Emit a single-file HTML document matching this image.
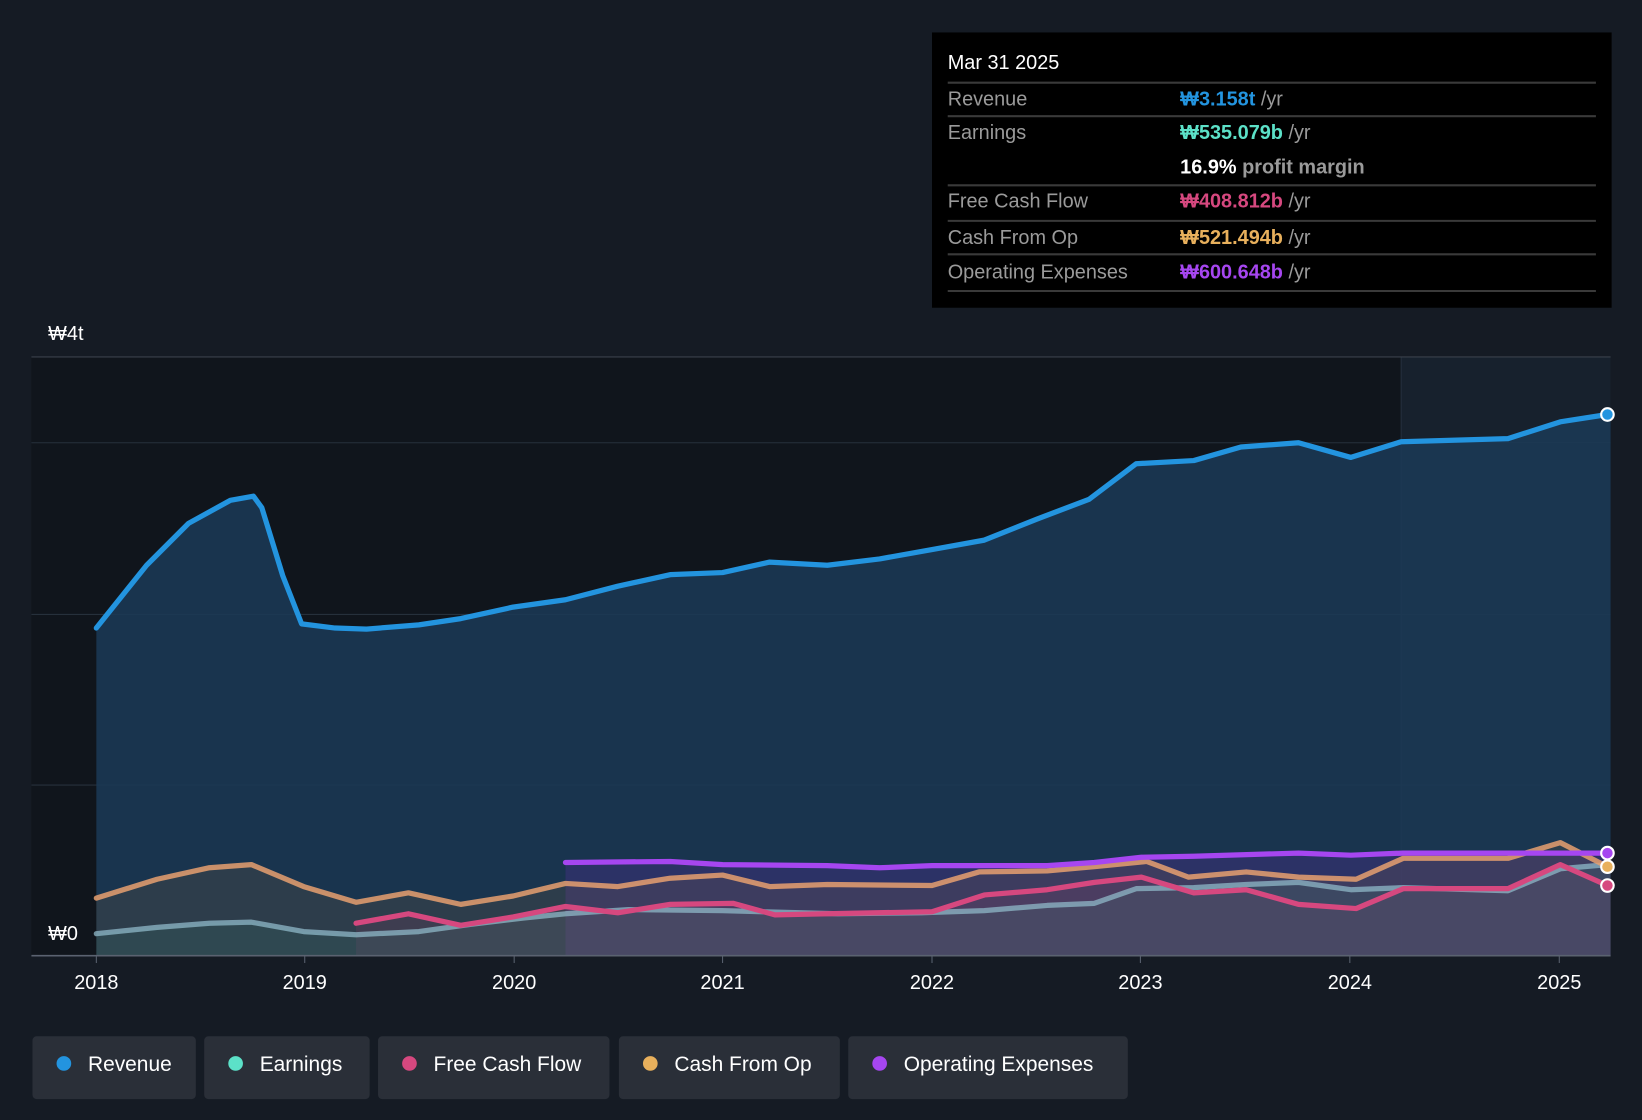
<!DOCTYPE html>
<html><head><meta charset="utf-8"><style>
html,body{margin:0;padding:0;background:#151b24;width:1642px;height:1120px;overflow:hidden}
svg{display:block;font-family:"Liberation Sans",sans-serif}
</style></head><body>
<svg width="1642" height="1120" viewBox="0 0 1568 1070" preserveAspectRatio="none">
<rect width="1568" height="1070" fill="#151b24"/>
<rect x="30" y="341" width="1308" height="572" fill="#10151c"/>
<rect x="1338" y="341" width="200" height="572" fill="#17212d"/>
<line x1="1338" y1="341" x2="1338" y2="913" stroke="#24303e"/>
<line x1="30" y1="341" x2="1538" y2="341" stroke="#3a414b"/>
<g stroke="#26303b"><line x1="30" y1="423" x2="1538" y2="423"/><line x1="30" y1="587" x2="1538" y2="587"/><line x1="30" y1="750" x2="1538" y2="750"/></g>
<polygon fill="#1b3a57" fill-opacity="0.85" points="92,913 92,600 140,540 180,500 220,478 242,474 250,485 270,550 288,596 320,600 350,601 400,597 440,591 490,580 540,573 590,560 640,549 690,547 735,537 790,540 840,534 890,525 940,516 990,496 1040,477 1085,443 1140,440 1185,427 1240,423 1290,437 1338,422 1440,419 1490,403 1535,396 1538,396 1538,913"/>
<polygon fill="#5a2fa0" fill-opacity="0.3" points="540,913 540,824 640,823 690,826 790,827 840,829 890,827 1000,827 1045,824 1090,819 1140,818 1240,815 1290,817 1340,815 1538,815 1538,913"/>
<polygon fill="#8a6a40" fill-opacity="0.18" points="92,913 92,858 150,840 200,829 240,826 290,847 340,862 390,853 440,864 490,856 540,844 590,847 640,839 690,836 735,847 790,845 890,846 935,833 1000,832 1045,828 1095,823 1135,838 1190,833 1240,838 1295,840 1340,820 1440,820 1490,805 1538,828 1538,913"/>
<polygon fill="#a04070" fill-opacity="0.15" points="340,913 340,882 390,873 440,884 490,876 540,866 590,872 640,864 700,863 740,874 790,873 890,871 940,855 1000,850 1045,843 1090,838 1140,853 1190,850 1240,864 1295,868 1340,849 1440,849 1490,826 1538,846 1538,913"/>
<polygon fill="#3a8a7a" fill-opacity="0.15" points="92,913 92,892 150,886 200,882 240,881 290,890 340,893 400,890 450,883 500,877 540,873 600,869 690,870 800,873 880,872 940,870 1000,865 1045,863 1085,849 1140,848 1190,845 1240,843 1290,850 1340,848 1440,851 1490,830 1538,826 1538,913"/>
<g fill="none" stroke-width="5" stroke-linejoin="round" stroke-linecap="round">
<polyline stroke="#8fb8c8" stroke-opacity="0.75" points="92,892 150,886 200,882 240,881 290,890 340,893 400,890 450,883 500,877 540,873 600,869 690,870 800,873 880,872 940,870 1000,865 1045,863 1085,849 1140,848 1190,845 1240,843 1290,850 1340,848 1440,851 1490,830 1535,826"/>
<polyline stroke="#d6487f" points="340,882 390,873 440,884 490,876 540,866 590,872 640,864 700,863 740,874 790,873 890,871 940,855 1000,850 1045,843 1090,838 1140,853 1190,850 1240,864 1295,868 1340,849 1440,849 1490,826 1535,846"/>
<polyline stroke="#e8a070" stroke-opacity="0.85" points="92,858 150,840 200,829 240,826 290,847 340,862 390,853 440,864 490,856 540,844 590,847 640,839 690,836 735,847 790,845 890,846 935,833 1000,832 1045,828 1095,823 1135,838 1190,833 1240,838 1295,840 1340,820 1440,820 1490,805 1535,828"/>
<polyline stroke="#a646f0" points="540,824 640,823 690,826 790,827 840,829 890,827 1000,827 1045,824 1090,819 1140,818 1240,815 1290,817 1340,815 1535,815"/>
<polyline stroke="#2394df" points="92,600 140,540 180,500 220,478 242,474 250,485 270,550 288,596 320,600 350,601 400,597 440,591 490,580 540,573 590,560 640,549 690,547 735,537 790,540 840,534 890,525 940,516 990,496 1040,477 1085,443 1140,440 1185,427 1240,423 1290,437 1338,422 1440,419 1490,403 1535,396"/>
</g>
<g stroke="#fff" stroke-width="2">
<circle cx="1535" cy="396" r="6" fill="#2394df"/>
<circle cx="1535" cy="815" r="6" fill="#a646f0"/>
<circle cx="1535" cy="828" r="6" fill="#e8b05c"/>
<circle cx="1535" cy="846" r="6" fill="#d6487f"/>
</g>
<line x1="30" y1="913" x2="1538" y2="913" stroke="#5a6270" stroke-width="1.5"/>
<g fill="#fff" font-size="19"><text x="46" y="325">₩4t</text><text x="46" y="898">₩0</text></g>
<g fill="#fff" font-size="19" text-anchor="middle">
<text x="92" y="945">2018</text><text x="291" y="945">2019</text><text x="491" y="945">2020</text><text x="690" y="945">2021</text><text x="890" y="945">2022</text><text x="1089" y="945">2023</text><text x="1289" y="945">2024</text><text x="1489" y="945">2025</text></g>
<g stroke="#5a6270"><line x1="92" y1="913" x2="92" y2="920"/><line x1="291" y1="913" x2="291" y2="920"/><line x1="491" y1="913" x2="491" y2="920"/><line x1="690" y1="913" x2="690" y2="920"/><line x1="890" y1="913" x2="890" y2="920"/><line x1="1089" y1="913" x2="1089" y2="920"/><line x1="1289" y1="913" x2="1289" y2="920"/><line x1="1489" y1="913" x2="1489" y2="920"/></g>
<rect x="890" y="31" width="649" height="263" fill="#000"/>
<g stroke="#3a3a3a" stroke-width="2"><line x1="905" y1="79" x2="1524" y2="79"/><line x1="905" y1="111" x2="1524" y2="111"/><line x1="905" y1="177" x2="1524" y2="177"/><line x1="905" y1="211" x2="1524" y2="211"/><line x1="905" y1="243" x2="1524" y2="243"/><line x1="905" y1="278" x2="1524" y2="278"/></g>
<g font-size="19">
<text x="905" y="66" fill="#fff">Mar 31 2025</text>
<g fill="#9a9a9a"><text x="905" y="101">Revenue</text><text x="905" y="133">Earnings</text><text x="905" y="198">Free Cash Flow</text><text x="905" y="233">Cash From Op</text><text x="905" y="266">Operating Expenses</text></g>
<text x="1127" y="101" font-weight="bold" fill="#2394df">₩3.158t <tspan fill="#9a9a9a" font-weight="normal">/yr</tspan></text>
<text x="1127" y="133" font-weight="bold" fill="#5ce1c8">₩535.079b <tspan fill="#9a9a9a" font-weight="normal">/yr</tspan></text>
<text x="1127" y="166" font-weight="bold" fill="#fff">16.9% <tspan fill="#9a9a9a">profit margin</tspan></text>
<text x="1127" y="198" font-weight="bold" fill="#d6487f">₩408.812b <tspan fill="#9a9a9a" font-weight="normal">/yr</tspan></text>
<text x="1127" y="233" font-weight="bold" fill="#e8b05c">₩521.494b <tspan fill="#9a9a9a" font-weight="normal">/yr</tspan></text>
<text x="1127" y="266" font-weight="bold" fill="#a646f0">₩600.648b <tspan fill="#9a9a9a" font-weight="normal">/yr</tspan></text>
</g>
<g fill="#2a2f38"><rect x="31" y="990" width="156" height="60" rx="4"/><rect x="195" y="990" width="158" height="60" rx="4"/><rect x="361" y="990" width="221" height="60" rx="4"/><rect x="591" y="990" width="211" height="60" rx="4"/><rect x="810" y="990" width="267" height="60" rx="4"/></g>
<circle cx="61" cy="1016" r="7" fill="#2394df"/><circle cx="225" cy="1016" r="7" fill="#5ce1c8"/><circle cx="391" cy="1016" r="7" fill="#d6487f"/><circle cx="621" cy="1016" r="7" fill="#e8b05c"/><circle cx="840" cy="1016" r="7" fill="#a646f0"/>
<g fill="#fff" font-size="20"><text x="84" y="1023">Revenue</text><text x="248" y="1023">Earnings</text><text x="414" y="1023">Free Cash Flow</text><text x="644" y="1023">Cash From Op</text><text x="863" y="1023">Operating Expenses</text></g>
</svg>
</body></html>
